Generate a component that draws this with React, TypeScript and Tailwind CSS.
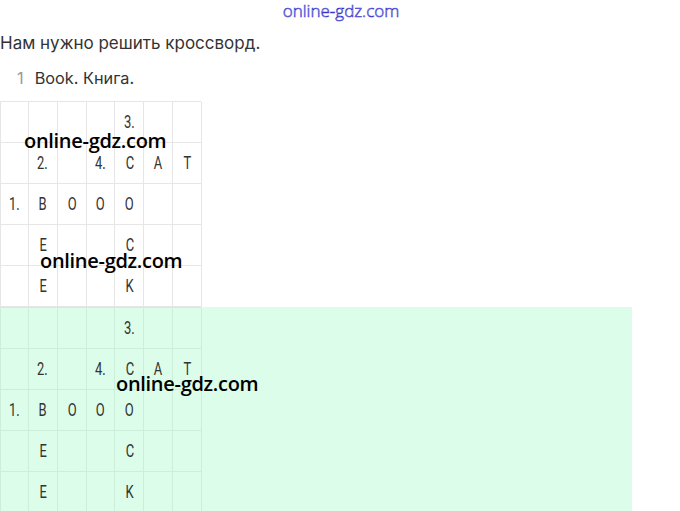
const rows = [
  ["", "", "", "", "3.", "", ""],
  ["", "2.", "", "4.", "C", "A", "T"],
  ["1.", "B", "O", "O", "O", "", ""],
  ["", "E", "", "", "C", "", ""],
  ["", "E", "", "", "K", "", ""],
];

function Grid({ line }: { line: string }) {
  return (
    <div className={`grid w-[201px] grid-cols-[28px_repeat(6,28.83px)] border-l border-t ${line}`}>
      {rows.flat().map((c, i) => (
        <div
          key={i}
          className={`flex h-[41px] items-center justify-center border-b border-r ${line} text-[#333]`}
        >
          <span className="inline-block scale-x-[0.72] font-['Liberation_Sans_Narrow','Roboto',sans-serif] text-[18px] leading-none">
            {c}
          </span>
        </div>
      ))}
    </div>
  );
}

function Mark({ pos }: { pos: string }) {
  return (
    <span className={`pointer-events-none absolute ${pos} font-['Open_Sans',sans-serif] text-[20px] font-semibold tracking-[-0.3px] leading-none text-black`}>
      online-gdz.com
    </span>
  );
}

export default function App() {
  return (
    <div className="relative h-[511px] w-[680px] overflow-hidden bg-white font-['Inter',sans-serif] text-[#333]">
      <div className="flex h-[23px] justify-center pt-[1px]">
        <span className="pl-[2px] font-['Open_Sans',sans-serif] text-[17px] font-light leading-[20px] text-white [-webkit-text-stroke:0.6px_#3434d0]">
          online-gdz.com
        </span>
      </div>
      <p className="mt-[9px] text-[17px] leading-[22px]">Нам нужно решить кроссворд.</p>
      <div className="mt-[13px] flex items-center gap-[11px] pl-[17px] text-[16.3px] leading-[22px]">
        <span className="text-[#999]">1</span>
        <span>Book. Книга.</span>
      </div>
      <div className="mt-[12px]">
        <Grid line="border-[#e6e6e6]" />
      </div>
      <div className="w-[632px] bg-[#dcfde9]">
        <Grid line="border-[#cdeedb]" />
      </div>
      <Mark pos="left-[24px] top-[131px]" />
      <Mark pos="left-[40px] top-[251px]" />
      <Mark pos="left-[116px] top-[374px]" />
    </div>
  );
}
